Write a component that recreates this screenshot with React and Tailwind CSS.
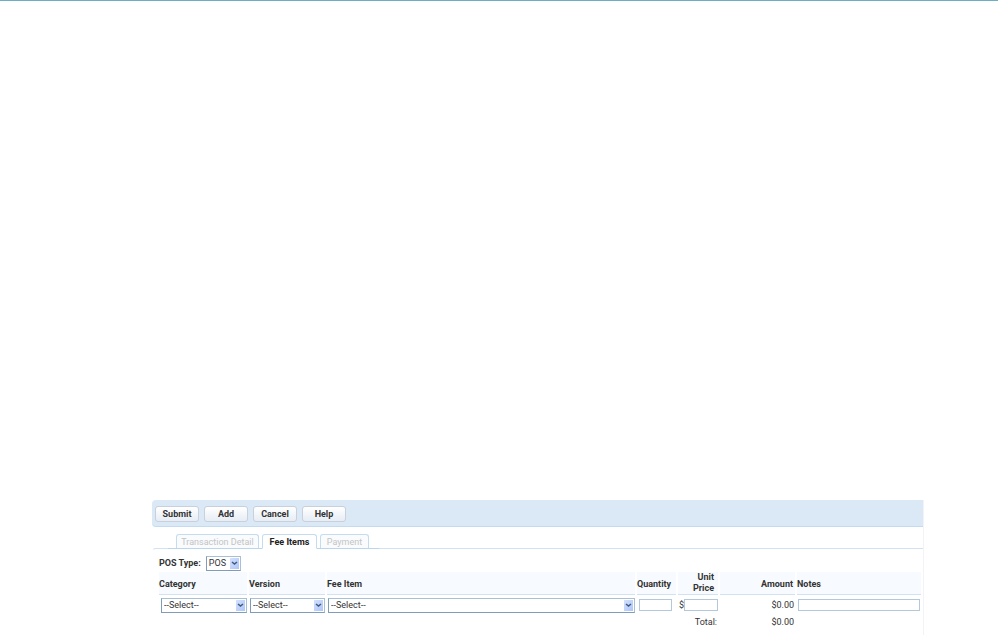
import React, { useState } from 'react';
import { clsx } from 'clsx';

const actions = ['Submit', 'Add', 'Cancel', 'Help'];

const tabs = [
  { id: 'detail', label: 'Transaction Detail', width: 'w-[83px]', disabled: true },
  { id: 'fees', label: 'Fee Items', width: 'w-[55px]', disabled: false },
  { id: 'payment', label: 'Payment', width: 'w-[49px]', disabled: true },
];

function SelectBox({ id, label, options, className }) {
  return (
    <div
      className={clsx(
        'relative h-[15px] border border-[#a9bfd3] border-b-[#7f9db9] border-l-[#7f9db9] bg-white',
        className
      )}
    >
      <select
        id={id}
        aria-label={label}
        className="block h-full w-full appearance-none bg-transparent pl-0.5 leading-[13px] outline-none"
      >
        {options.map((o) => (
          <option key={o}>{o}</option>
        ))}
      </select>
      <span className="pointer-events-none absolute inset-y-px right-px flex w-[9px] items-center justify-center bg-linear-to-br from-[#d3e1fd] to-[#adc5f7]">
        <svg viewBox="0 0 7 5" className="h-[5px] w-[7px]" fill="none" stroke="#43597f" strokeWidth="1.5">
          <path d="M1 1l2.5 2L6 1" />
        </svg>
      </span>
    </div>
  );
}

function TextBox({ label, className }) {
  return (
    <input
      type="text"
      aria-label={label}
      className={clsx('block h-3 border border-[#b4c8db] bg-white px-0.5 outline-none', className)}
    />
  );
}

function Toolbar() {
  return (
    <div className="flex h-[27px] items-center gap-[5px] rounded-l border-b border-[#c3daf1] bg-[#dbe8f6] pt-px pl-[3px]">
      {actions.map((a) => (
        <button
          key={a}
          type="button"
          className="h-4 w-11 rounded-[3px] border border-[#c9d0da] bg-linear-to-b from-white to-[#e6edf5] text-center leading-[14px] font-bold text-[#333]"
        >
          {a}
        </button>
      ))}
    </div>
  );
}

function TabBar({ active, onChange }) {
  return (
    <div className="relative flex pl-4">
      <div role="tablist" className="flex h-[15px] gap-[3px] border-b border-[#b9d6ee] pr-2.5 pl-2">
        {tabs.map((t) => (
          <button
            key={t.id}
            type="button"
            role="tab"
            aria-selected={active === t.id}
            disabled={t.disabled}
            onClick={() => onChange(t.id)}
            className={clsx(
              'rounded-t-[3px] border border-[#c4dcf0] text-center leading-[14px] whitespace-nowrap',
              t.width,
              active === t.id
                ? 'h-[15px] border-b-white bg-white font-bold text-[#222]'
                : 'h-[14px] border-b-0 bg-[#f9fbfd] text-[#c4c4c4]'
            )}
          >
            {t.label}
          </button>
        ))}
      </div>
    </div>
  );
}

function FeeTable() {
  const head = 'border-b border-[#d3e2f1] bg-[#f7fbff] p-0 font-bold';
  return (
    <table className="w-full table-fixed border-separate border-spacing-x-0.5 border-spacing-y-0">
      <colgroup>
        <col className="w-[88px]" />
        <col className="w-[76px]" />
        <col />
        <col className="w-[39px]" />
        <col className="w-[40px]" />
        <col className="w-[75px]" />
        <col className="w-[124px]" />
      </colgroup>
      <thead>
        <tr className="h-[23px] text-left">
          <th className={clsx(head, 'pt-0.5')}>Category</th>
          <th className={clsx(head, 'pt-0.5')}>Version</th>
          <th className={clsx(head, 'pt-0.5')}>Fee Item</th>
          <th className={clsx(head, 'pt-0.5')}>Quantity</th>
          <th className={clsx(head, 'pr-1 pl-2 text-right')}>Unit Price</th>
          <th className={clsx(head, 'pt-0.5 pr-0.5 text-right')}>Amount</th>
          <th className={clsx(head, 'pt-0.5')}>Notes</th>
        </tr>
      </thead>
      <tbody>
        <tr className="h-5">
          <td className="p-0 pl-0.5">
            <SelectBox label="Category" options={['--Select--']} />
          </td>
          <td className="p-0 pl-px">
            <SelectBox label="Version" options={['--Select--']} />
          </td>
          <td className="p-0 pl-px">
            <SelectBox label="Fee Item" options={['--Select--']} />
          </td>
          <td className="p-0 pr-1 pl-0.5">
            <TextBox label="Quantity" className="w-full" />
          </td>
          <td className="p-0 pl-px">
            <div className="flex items-center">
              <span>$</span>
              <TextBox label="Unit Price" className="min-w-0 flex-1" />
            </div>
          </td>
          <td className="p-0 pr-px text-right">$0.00</td>
          <td className="p-0 px-px">
            <TextBox label="Notes" className="w-full" />
          </td>
        </tr>
        <tr className="h-[14px] text-right">
          <td colSpan={5} className="p-0 pr-px">Total:</td>
          <td className="p-0 pr-px">$0.00</td>
          <td className="p-0" />
        </tr>
      </tbody>
    </table>
  );
}

export default function App() {
  const [activeTab, setActiveTab] = useState('fees');

  return (
    <div className="min-h-screen border-t border-[#6baec6] bg-white font-[Roboto,Arial,sans-serif] text-[9px] leading-[11px] text-[#333]">
      <main className="pt-[499px] pr-[74px] pl-[152px]">
        <div className="border-r border-[#f1f3f6]">
          <Toolbar />
          <div className="pt-[7px]">
            <TabBar active={activeTab} onChange={setActiveTab} />
          </div>
          <section className="-mt-px rounded-tl border-t border-l border-[#d3e2f1] border-l-transparent pt-[7px] pb-1.5 pl-1">
            <div className="flex items-center gap-[5px] pb-px pl-0.5">
              <label htmlFor="pos-type" className="font-bold">
                POS Type:
              </label>
              <SelectBox id="pos-type" options={['POS']} className="w-[35px]" />
            </div>
            <FeeTable />
          </section>
        </div>
      </main>
    </div>
  );
}
